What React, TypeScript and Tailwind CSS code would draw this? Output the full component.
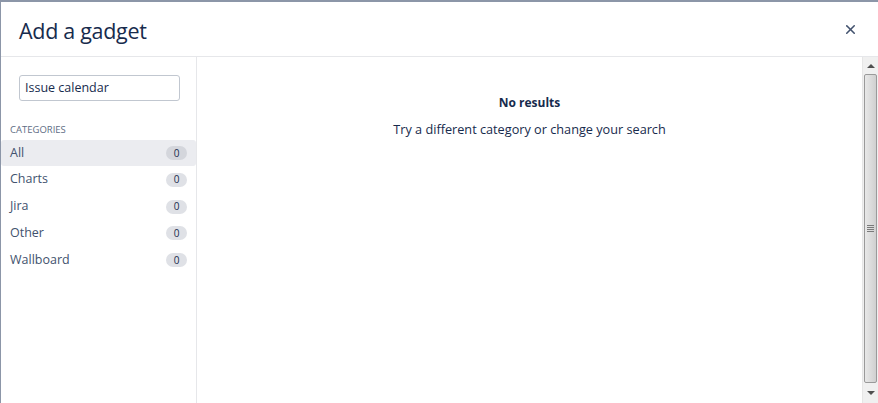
import { X } from "lucide-react"

const categories = ["All", "Charts", "Jira", "Other", "Wallboard"]

function Scrollbar() {
  return (
    <div className="w-[16px] flex flex-col bg-[#f0f0f0] border-l border-[#e6e6e6]">
      <div className="h-[17px] flex items-center justify-center">
        <div className="w-0 h-0 border-l-[4px] border-r-[4px] border-b-[4px] border-l-transparent border-r-transparent border-b-[#505050]" />
      </div>
      <div className="flex-1 mx-[1px] rounded-[2px] border border-[#9a9a9a] bg-gradient-to-r from-[#e8e8e8] via-[#dcdcdc] to-[#d0d0d0] flex items-center justify-center">
        <div className="flex flex-col gap-[1px]">
          <div className="w-[7px] h-[1px] bg-[#7a7a7a]" />
          <div className="w-[7px] h-[1px] bg-[#7a7a7a]" />
          <div className="w-[7px] h-[1px] bg-[#7a7a7a]" />
          <div className="w-[7px] h-[1px] bg-[#7a7a7a]" />
        </div>
      </div>
      <div className="h-[20px] flex items-start pt-[8px] justify-center">
        <div className="w-0 h-0 border-l-[4px] border-r-[4px] border-t-[4px] border-l-transparent border-r-transparent border-t-[#505050]" />
      </div>
    </div>
  )
}

export default function App() {
  return (
    <div
      className="w-[878px] h-[403px] bg-[#8c96a8] pt-[2px] pl-[1px] overflow-hidden"
      style={{ fontFamily: '"Open Sans", "Noto Sans", sans-serif' }}
    >
      <div className="h-full bg-white flex flex-col">
        <div className="h-[55px] flex items-center justify-between pl-[18px] pr-[20px] border-b border-[#e6e7ea] shrink-0">
          <h1 className="text-[21.5px] text-[#172b4d] tracking-[-0.3px] pt-[4px]">Add a gadget</h1>
          <X className="w-[15px] h-[15px] text-[#42526e]" strokeWidth={2.5} />
        </div>
        <div className="flex flex-1 min-h-0">
          <div className="w-[196px] border-r border-[#e6e7ea] shrink-0 pt-[18px]">
            <div className="pl-[18px] pr-[16px]">
              <div className="h-[26px] border border-[#c1c7d0] rounded-[3px] flex items-center px-[5px] text-[12.5px] text-[#172b4d]">
                Issue calendar
              </div>
            </div>
            <div className="mt-[23px] pl-[9px] text-[9.5px] text-[#5e6c84] leading-[12px]">CATEGORIES</div>
            <div className="mt-[4px] flex flex-col gap-[0.75px]">
              {categories.map((c, i) => (
                <div
                  key={c}
                  className={`h-[26px] flex items-center justify-between pl-[9px] pr-[9px] rounded-[3px] text-[12.5px] text-[#42526e] ${
                    i === 0 ? "bg-[#ebecf0]" : ""
                  }`}
                >
                  <span>{c}</span>
                  <span
                    className={`w-[21px] h-[14px] rounded-full flex items-center justify-center text-[10px] text-[#172b4d] ${
                      i === 0 ? "bg-[#d4d6dc]" : "bg-[#dfe1e6]"
                    }`}
                  >
                    0
                  </span>
                </div>
              ))}
            </div>
          </div>
          <div className="flex-1 flex flex-col items-center pt-[37px] text-[12.7px] text-[#172b4d]">
            <div className="font-bold text-[12px]">No results</div>
            <div className="mt-[8px]">Try a different category or change your search</div>
          </div>
          <Scrollbar />
        </div>
      </div>
    </div>
  )
}
